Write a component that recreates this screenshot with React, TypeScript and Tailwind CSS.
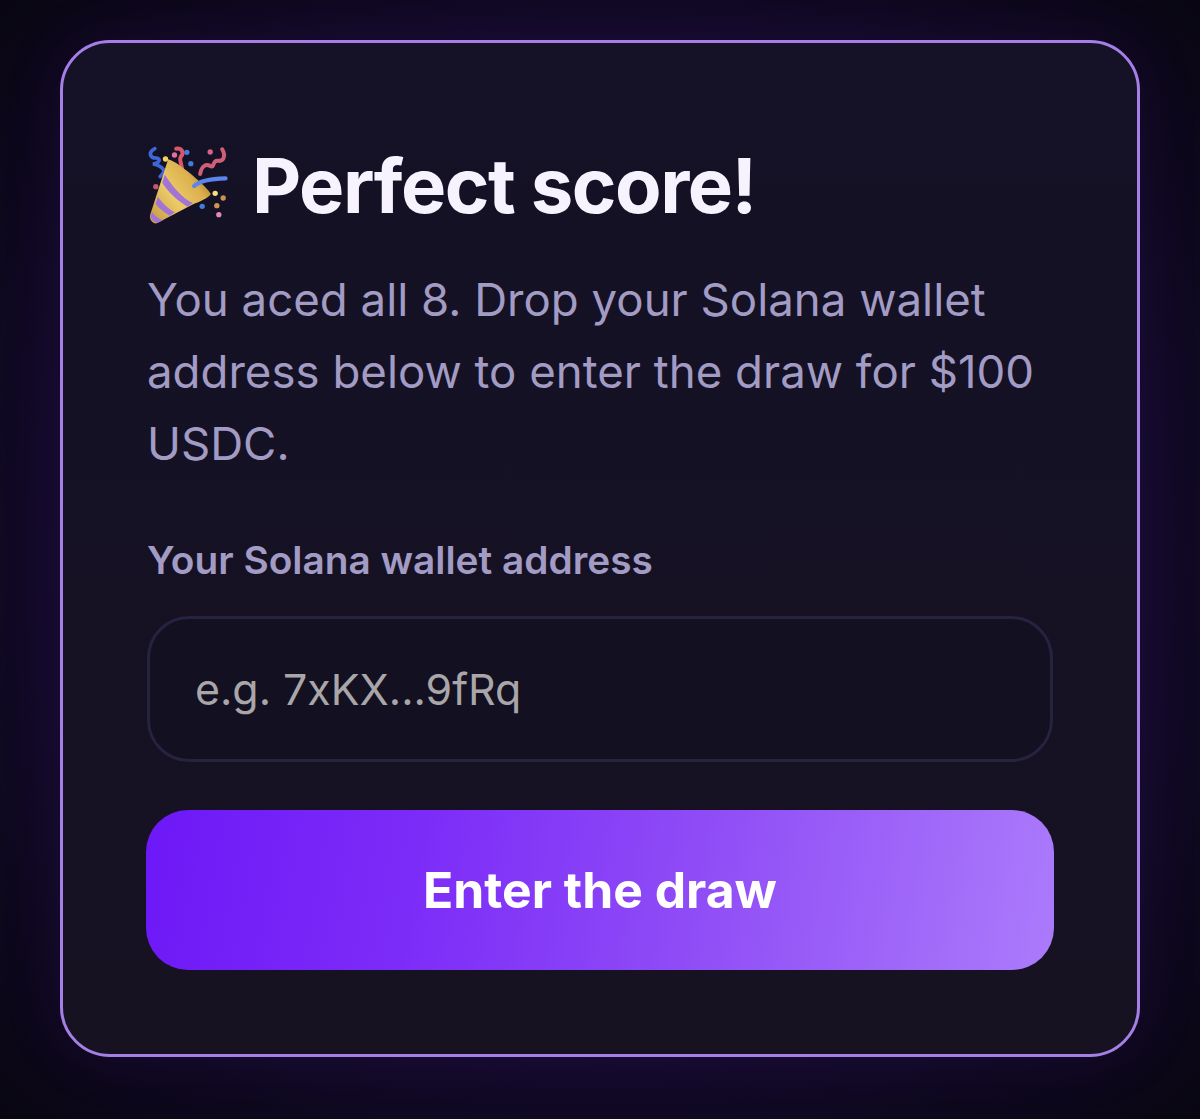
const font = "font-['Inter','Liberation_Sans',sans-serif]";

function PartyPopper() {
  return (
    <svg viewBox="55 45 245 240" className="w-[82px] h-[80px] shrink-0" fill="none">
      <defs>
        <linearGradient id="cone" x1="70" y1="260" x2="240" y2="130" gradientUnits="userSpaceOnUse">
          <stop offset="0" stopColor="#c9a049" />
          <stop offset="0.4" stopColor="#eccb68" />
          <stop offset="0.75" stopColor="#dcb04e" />
          <stop offset="1" stopColor="#9c7427" />
        </linearGradient>
      </defs>
      {/* streamers behind the cone */}
      <path d="M78 56 C58 66 62 84 82 84 C98 86 92 100 72 102 C92 104 110 118 104 128 L94 140" stroke="#3f66d8" strokeWidth="11" strokeLinecap="round" />
      <path d="M142 56 C158 54 168 68 156 80 C148 92 164 106 160 134" stroke="#d9566b" strokeWidth="12" strokeLinecap="round" />
      <path d="M214 132 C218 108 232 100 244 108 C258 116 250 90 266 92 C284 96 292 78 280 58" stroke="#cf5f78" strokeWidth="12" strokeLinecap="round" />
      {/* cone */}
      <path d="M118 88 C150 96 236 172 246 192 C240 204 210 216 190 224 L84 280 C72 282 60 268 64 254 Z" fill="url(#cone)" />
      {/* purple bands */}
      <path d="M108 134 C130 168 160 204 192 219 L176 230 C146 212 114 182 100 158 Z" fill="#a274d6" />
      <path d="M87 200 C100 218 118 236 138 247 L122 257 C106 247 89 233 80 222 Z" fill="#a274d6" />
      <path d="M70 246 C76 256 88 266 102 271 L86 279 C76 276 68 268 65 260 Z" fill="#a274d6" />
      {/* front streamer */}
      <path d="M196 168 C214 150 250 146 290 145" stroke="#5b85e8" strokeWidth="13" strokeLinecap="round" />
      {/* confetti */}
      <circle cx="110" cy="87" r="8" fill="#f4d35e" />
      <circle cx="137" cy="75" r="8" fill="#e0719a" />
      <circle cx="174" cy="67" r="8" fill="#3f7fd8" />
      <circle cx="186" cy="101" r="8" fill="#3f7fd8" />
      <circle cx="244" cy="66" r="8" fill="#d9608a" />
      <circle cx="81" cy="170" r="8" fill="#c9566b" />
      <circle cx="259" cy="190" r="8" fill="#f4e07a" />
      <circle cx="283" cy="204" r="8" fill="#c99250" />
      <circle cx="264" cy="227" r="8" fill="#cf9650" />
      <circle cx="220" cy="229" r="8" fill="#3f7fd8" />
      <circle cx="270" cy="254" r="8" fill="#e58ab0" />
    </svg>
  );
}

export default function App() {
  return (
    <div className={`${font} min-h-[1119px] bg-[radial-gradient(ellipse_at_center,#160a30_0%,#130a2a_60%,#090612_100%)] px-[60px] pt-[40px] pb-[62px]`}>
      <div className="h-[1017px] rounded-[50px] border-[3px] border-[#a67fe6] bg-[linear-gradient(180deg,#151126_0%,#161222_100%)] p-[84px] shadow-[0_0_60px_rgba(91,33,182,0.14)]">
        <div className="flex items-center gap-[23px] h-[116px]">
          <PartyPopper />
          <h1 className="text-[76px] font-bold leading-[116px] tracking-[-1.5px] text-[#f6f3ff]">Perfect score!</h1>
        </div>
        <p className="mt-[21px] text-[45.6px] leading-[72px] text-[#a29bc4]">
          You aced all 8. Drop your Solana wallet address below to enter the draw for $100 USDC.
        </p>
        <label className="mt-[44px] block text-[38.8px] font-semibold leading-[72px] text-[#a29bc4]">
          Your Solana wallet address
        </label>
        <div className="mt-[20px] flex h-[146px] items-center rounded-[42px] border-[3px] border-[#26223f] bg-[#131021] px-[45px]">
          <input
            type="text"
            placeholder="e.g. 7xKX...9fRq"
            className="w-full bg-transparent text-[42.9px] text-[#f6f3ff] outline-none placeholder:text-[#a8a6a8]"
          />
        </div>
        <div className="-mx-px mt-[48px]">
          <button className="h-[160px] w-full rounded-[42px] bg-[linear-gradient(100deg,#6d18f7_0%,#7c2cf8_30%,#8f4cf6_60%,#ab7bfb_100%)] text-[49.8px] font-bold text-white">
            Enter the draw
          </button>
        </div>
      </div>
    </div>
  );
}
